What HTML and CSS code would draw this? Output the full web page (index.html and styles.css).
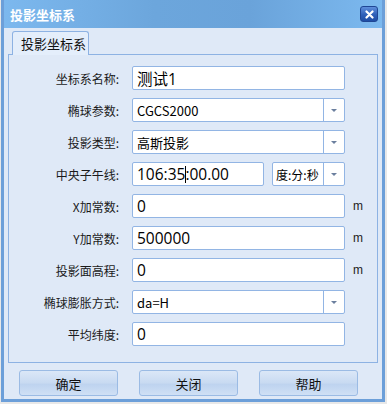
FILE: index.html
```html
<!DOCTYPE html>
<html>
  <head>
    <meta charset="utf-8" />
    <title>投影坐标系</title>
    <link rel="stylesheet" href="styles.css">
  </head>
  <body>
    <div class="window">
      <div class="titlebar">
        <span class="title">投影坐标系</span>
        <span class="close">
          <svg width="9" height="9" viewBox="0 0 9 9">
            <path d="M1.5 1.5 L7.5 7.5 M7.5 1.5 L1.5 7.5" stroke="#fff" stroke-width="2.2" stroke-linecap="round" />
          </svg>
        </span>
      </div>
      <div class="client">
        <div class="tabs">
          <div class="tab">投影坐标系</div>
        </div>
        <div class="panel">
          <div class="row">
            <label>坐标系名称:</label>
            <div class="field big">测试1</div>
          </div>
          <div class="row">
            <label>椭球参数:</label>
            <div class="field combo"><span class="val">CGCS2000</span><span class="arrow"></span></div>
          </div>
          <div class="row">
            <label>投影类型:</label>
            <div class="field combo"><span class="val">高斯投影</span><span class="arrow"></span></div>
          </div>
          <div class="row">
            <label>中央子午线:</label>
            <div class="field big short">106:35<span class="caret"></span>:00.00</div>
            <div class="field combo unit-combo"><span class="val small">度:分:秒</span><span class="arrow"></span></div>
          </div>
          <div class="row">
            <label>X加常数:</label>
            <div class="field big">0</div>
            <span class="unit">m</span>
          </div>
          <div class="row">
            <label>Y加常数:</label>
            <div class="field big">500000</div>
            <span class="unit">m</span>
          </div>
          <div class="row">
            <label>投影面高程:</label>
            <div class="field big">0</div>
            <span class="unit">m</span>
          </div>
          <div class="row">
            <label>椭球膨胀方式:</label>
            <div class="field combo"><span class="val">da=H</span><span class="arrow"></span></div>
          </div>
          <div class="row">
            <label>平均纬度:</label>
            <div class="field big">0</div>
          </div>
        </div>
        <div class="buttons">
          <button type="button">确定</button>
          <button type="button">关闭</button>
          <button type="button">帮助</button>
        </div>
      </div>
    </div>
  </body>
</html>
```
FILE: styles.css
```css
body {
  margin: 0;
  padding: 0 0 0 1px;
  background: #e8e8e8;
  font-family: "Noto Sans CJK SC", "Liberation Sans", sans-serif;
  font-size: 12px;
  color: #1e1e1e;
}
.window {
  width: 378px;
  height: 399px;
  border-left: 3px solid #6c9fd9;
  border-right: 3px solid #6c9fd9;
  border-bottom: 3px solid #6c9fd9;
  background: #dfe9f7;
}
.titlebar {
  height: 28px;
  display: flex;
  align-items: center;
  justify-content: space-between;
  padding: 0 4px 0 6px;
  background: linear-gradient(to right, #7cb8ee, #6ca6dc 40%, #6aa3da 65%, #7cb9ef);
}
.title {
  color: #fff;
  font-weight: bold;
  font-size: 13px;
}
.close {
  width: 16px;
  height: 14px;
  display: flex;
  align-items: center;
  justify-content: center;
  border: 1px solid #1f4694;
  border-radius: 3px;
  background: linear-gradient(#5f8fdc, #2d5fb8 55%, #1f4ea6);
}
.client {
  padding: 3px 4px 0 4px;
}
.tabs {
  display: flex;
  padding-left: 4px;
  height: 23px;
}
.tab {
  width: 77px;
  height: 24px;
  border: 1px solid #8db2e3;
  border-bottom: none;
  border-radius: 3px 3px 0 0;
  background: #e4eefb;
  font-size: 13px;
  color: #111;
  padding-left: 8px;
  line-height: 24px;
  white-space: nowrap;
  box-sizing: border-box;
  position: relative;
  z-index: 1;
  margin-bottom: -1px;
}
.panel {
  border: 1px solid #8db2e3;
  height: 296px;
  padding-top: 11px;
  display: flex;
  flex-direction: column;
  gap: 8px;
}
.row {
  display: flex;
  align-items: center;
  height: 24px;
}
.row label {
  width: 110px;
  text-align: right;
  margin-right: 13px;
  color: #1a1a1a;
}
.field {
  width: 213px;
  height: 24px;
  box-sizing: border-box;
  border: 1px solid #92b5e4;
  border-radius: 2px;
  background: #fff;
  display: flex;
  align-items: center;
  padding-left: 4px;
  color: #000;
}
.big {
  font-family: "Open Sans", "Noto Sans CJK SC", sans-serif;
  font-size: 15.5px;
}
.short {
  width: 132px;
}
.caret {
  display: inline-block;
  width: 1px;
  height: 17px;
  background: #000;
  margin-right: -1px;
}
.combo {
  padding-left: 0;
  font-size: 13px;
}
.combo .val {
  flex: 1;
  padding-left: 4px;
}
.combo .val.small {
  font-size: 12px;
  padding-left: 3px;
}
.arrow {
  width: 20px;
  height: 22px;
  border-left: 1px solid #92b5e4;
  position: relative;
}
.arrow::after {
  content: "";
  position: absolute;
  left: 7px;
  top: 10px;
  border-left: 3px solid transparent;
  border-right: 3px solid transparent;
  border-top: 3px solid #6b7f9e;
}
.unit-combo {
  width: 73px;
  margin-left: 8px;
}
.unit {
  margin-left: 8px;
  font-family: "Liberation Sans", sans-serif;
  font-size: 12px;
  color: #222;
}
.buttons {
  display: flex;
  gap: 21px;
  padding: 7px 0 0 11px;
}
button {
  width: 99px;
  height: 26px;
  border: 1px solid #9bbbe4;
  border-radius: 3px;
  background: linear-gradient(#dbe7f7, #c8daf1 50%, #bed3ef 55%, #cfe0f5);
  font-family: "Noto Sans CJK SC", sans-serif;
  font-size: 13px;
  color: #111;
  padding: 0;
}
```
